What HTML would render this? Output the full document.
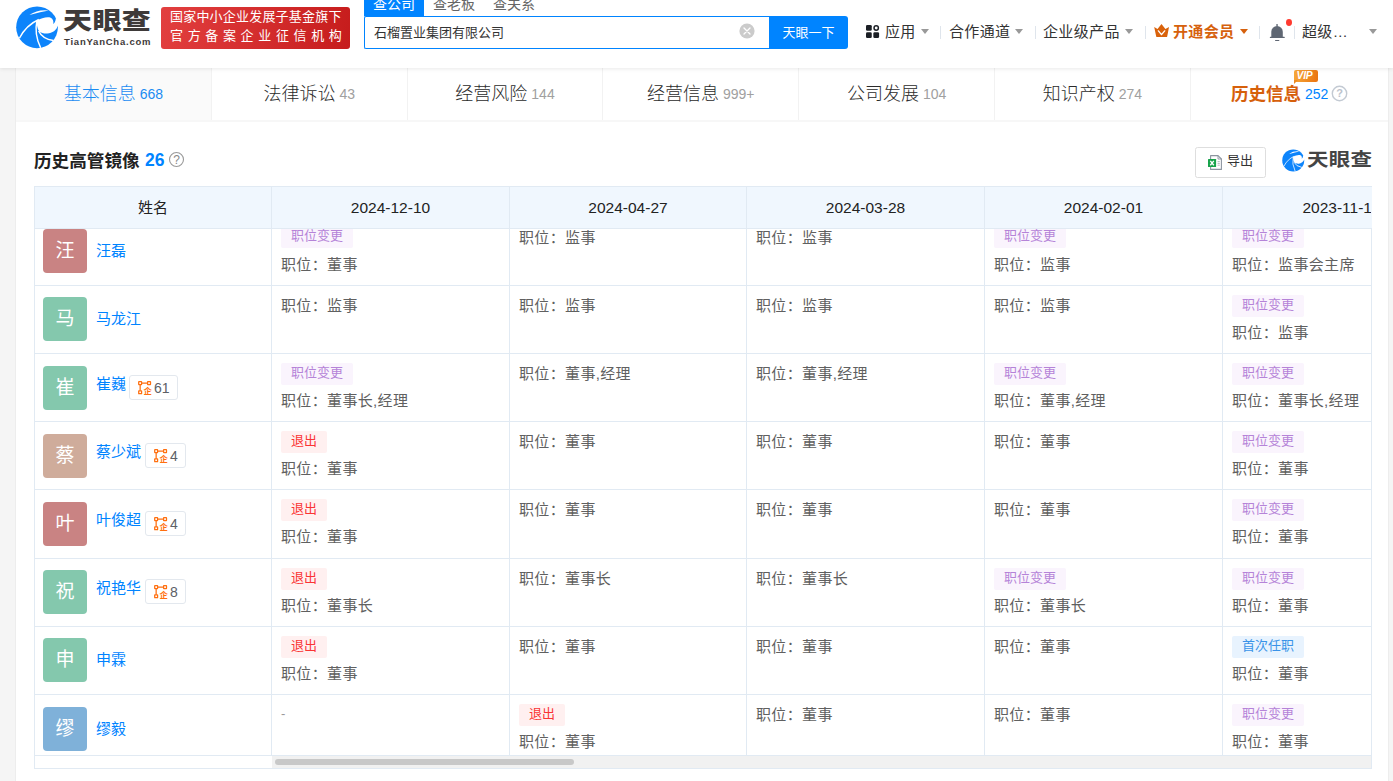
<!DOCTYPE html>
<html lang="zh-CN"><head><meta charset="utf-8"><title>天眼查 - 历史高管镜像</title>
<style>
*{box-sizing:border-box;margin:0;padding:0}
html,body{width:1393px;height:781px;overflow:hidden}
body{background:#f5f5f5;font-family:"Liberation Sans","Noto Sans CJK SC",sans-serif;color:#333;position:relative;font-size:14px}
.abs{position:absolute}
#hdr{position:absolute;left:0;top:0;width:1393px;height:68px;background:#fff;box-shadow:0 1px 4px rgba(0,0,0,.09);z-index:10}
#panel{position:absolute;left:16px;top:68px;width:1372px;height:713px;background:#fff}
#edgeL{position:absolute;left:15px;top:68px;width:1px;height:713px;background:#ededed}
#edgeR{position:absolute;left:1388px;top:68px;width:1px;height:713px;background:#ededed}
.t{position:absolute;white-space:nowrap;line-height:1}
/* header */
.logo-cn{left:63px;top:4px;font-size:29px;font-weight:900;color:#3e3a39;letter-spacing:.4px;transform:scaleY(.84);transform-origin:0 100%}
.logo-en{left:64px;top:36.7px;font-size:9.5px;font-weight:bold;color:#3e3a39;letter-spacing:.78px}
#badge{position:absolute;left:161px;top:7px;width:189px;height:42px;border-radius:3px;background:linear-gradient(100deg,#e23f3f 0%,#d32c2c 55%,#c61c1c 100%);color:#fff}
#badge .l1{left:9px;top:3px;font-size:13px;letter-spacing:.2px;font-weight:400}
#badge .l2{left:9px;top:22.3px;font-size:13px;letter-spacing:4.65px;font-weight:400}
.stab{position:absolute;top:-8px;height:24px;width:60px;text-align:center;font-size:14px;line-height:24px;color:#666}
.stab.on{background:#0084ff;color:#fff}
#sbox{position:absolute;left:364px;top:16px;width:406px;height:33px;border:1px solid #0084ff;border-right:0;background:#fff;border-radius:2px 0 0 2px}
#sbtn{position:absolute;left:769px;top:16px;width:79px;height:33px;background:#0084ff;border-radius:0 3px 3px 0;color:#fff;font-size:13px;text-align:center;line-height:33px}
.nav{font-size:15px;color:#333;top:24px;line-height:16px;letter-spacing:.35px}
.sep{position:absolute;top:26px;width:1px;height:13px;background:#dfe5ec}
.arr{position:absolute;top:29px;width:0;height:0;border-left:4px solid transparent;border-right:4px solid transparent;border-top:5px solid #999}
/* tabs */
.tab{position:absolute;top:0;height:52px;width:196px;border-right:1px solid #f2f2f2;text-align:center;line-height:52px;font-size:18px;color:#2b2b2b;white-space:nowrap;font-weight:300}
.tab small{font-size:14px;color:#a0a0a0;margin-left:4px;font-weight:400;position:relative;top:-1px}
.tab.on{background:#fafafa;color:#1a8cf2}
.tab.on small{color:#1a8cf2}
#tabline{position:absolute;left:0;top:52px;width:1372px;height:2px;background:#f7f7f7}
/* table */
#tbl{position:absolute;left:18px;top:118px;width:1338px;height:583px;overflow:hidden;border-left:1px solid #e1eaf3;border-bottom:1px solid #e1eaf3}
.th{position:absolute;top:0;height:43px;background:#f0f7fe;border-top:1px solid #e1eaf3;border-bottom:1px solid #e1eaf3;border-right:1px solid #e1eaf3;text-align:center;font-size:15px;line-height:42px;color:#222;z-index:3;white-space:nowrap}
.row{position:absolute;left:0;width:1500px;border-top:1px solid #e1eaf3}
.c{position:absolute;top:0;height:100%;border-right:1px solid #e1eaf3}
.av{position:absolute;left:8px;top:11px;width:44px;height:44px;border-radius:4px;color:#fff;font-size:19px;line-height:44px;text-align:center}
.nm{position:absolute;left:61px;font-size:15px;color:#0084ff;line-height:22px;white-space:nowrap}
.bd{position:absolute;height:25px;border:1px solid #e3e8ee;border-radius:3px;font-size:14px;color:#5c6066;line-height:24px;padding-left:24px;padding-right:7px;background:#fff}
.bd svg{position:absolute;left:7.5px;top:4.7px}
.tag{position:absolute;left:9px;top:9px;height:22px;padding:0 10px;border-radius:2px;font-size:13px;line-height:20px;white-space:nowrap}
.tag.p{background:#faf4fd;color:#b583d8}
.tag.r{background:#fff0f0;color:#fa3434}
.tag.b{background:#e8f3fe;color:#3a93e8}
.pos{position:absolute;left:9px;font-size:15px;color:#606060;line-height:22px;white-space:nowrap;letter-spacing:.35px}
</style></head><body>
<div id="hdr">
<svg class="abs" style="left:10px;top:0" width="56" height="56" viewBox="0 0 781 781"><circle cx="377" cy="381" r="291" fill="#0d84fb"/>
<path d="M272 207 Q390 125 542 146 Q420 168 300 203 Z" fill="#fff"/>
<path d="M372 292 C440 250 520 230 568 248 C598 262 612 295 603 336 C618 325 634 300 640 258 L720 250 L720 358 L668 358 C650 420 590 462 520 468 C470 470 430 455 408 438 C380 400 372 340 372 292 Z" fill="#fff"/>
<path d="M131 534 Q225 350 402 272" fill="none" stroke="#fff" stroke-width="20"/>
<path d="M375 288 Q335 480 428 668" fill="none" stroke="#fff" stroke-width="20"/>
<path d="M400 432 Q450 540 604 566" fill="none" stroke="#fff" stroke-width="22"/></svg>
<div class="t logo-cn">天眼查</div>
<div class="t logo-en">TianYanCha.com</div>
<div id="badge"><div class="t l1">国家中小企业发展子基金旗下</div><div class="t l2">官方备案企业征信机构</div></div>
<div class="stab on" style="left:364px">查公司</div><div class="stab" style="left:424px">查老板</div><div class="stab" style="left:484px">查关系</div>
<div id="sbox"><div class="t" style="left:9px;top:9px;font-size:13px;color:#333">石榴置业集团有限公司</div>
<svg class="abs" style="left:374.3px;top:6.3px" width="16" height="16" viewBox="0 0 16 16"><circle cx="8" cy="8" r="7.6" fill="#cbcbcb"/><path d="M5 5 L11 11 M11 5 L5 11" stroke="#fff" stroke-width="1.3" stroke-linecap="round"/></svg>
</div>
<div id="sbtn">天眼一下</div>
<svg class="abs" style="left:866px;top:25px" width="13.9" height="13.9" viewBox="0 0 14 14"><g fill="#1b1f25"><rect x="0" y="0" width="5.8" height="5.8" rx="1.3"/><rect x="0" y="7.3" width="5.8" height="5.8" rx="1.3"/><rect x="7.4" y="7.3" width="5.8" height="5.8" rx="1.3"/></g><circle cx="10.3" cy="3" r="2.2" fill="none" stroke="#1b1f25" stroke-width="1.5"/></svg>
<div class="t nav" style="left:885px">应用</div><div class="arr" style="left:921px"></div>
<div class="sep" style="left:940px"></div>
<div class="t nav" style="left:949px">合作通道</div><div class="arr" style="left:1015px"></div>
<div class="sep" style="left:1035px"></div>
<div class="t nav" style="left:1043px">企业级产品</div><div class="arr" style="left:1125px"></div>
<div class="sep" style="left:1145px"></div>
<svg class="abs" style="left:1154px;top:24px" width="16" height="14" viewBox="0 0 16 14"><path d="M0.2 3 L3.5 4.9 L7.5 0 L11.4 4.9 L15 3 L13.2 12.4 Q13.1 13.1 12.4 13.1 L3 13.1 Q2.3 13.1 2.2 12.4 Z" fill="#d9620b"/><path d="M4.4 6.9 L7.5 10.6 L10.7 6.9" fill="none" stroke="#fff" stroke-width="1.4" stroke-linejoin="round" stroke-linecap="round"/></svg>
<div class="t nav" style="left:1173px;color:#d6610d;font-weight:bold">开通会员</div><div class="arr" style="left:1240px;border-top-color:#d6610d"></div>
<div class="sep" style="left:1259px"></div>
<svg class="abs" style="left:1269px;top:23px" width="17" height="19" viewBox="0 0 17 19"><g fill="#5f6773"><path d="M2.3 14.2 V8.8 A5.75 5.75 0 0 1 13.8 8.8 V14.2 Z"/><rect x=".8" y="13.8" width="15" height="1.3" rx=".6"/><rect x="7.35" y="1.1" width="1.4" height="2.4" rx=".4"/><rect x="6" y="16.9" width="4.4" height="1.2" rx=".6"/></g></svg>
<div class="abs" style="left:1285.9px;top:19px;width:6.1px;height:7px;border-radius:50%;background:#ff3a2f"></div>
<div class="sep" style="left:1294px"></div>
<div class="t nav" style="left:1302px">超级…</div><div class="arr" style="left:1369px"></div>
</div>
<div id="edgeL"></div><div id="edgeR"></div>
<div id="panel">
<div class="tab on" style="left:0.00px;width:195.80px">基本信息<small>668</small></div>
<div class="tab" style="left:195.80px;width:195.80px">法律诉讼<small>43</small></div>
<div class="tab" style="left:391.60px;width:195.80px">经营风险<small>144</small></div>
<div class="tab" style="left:587.40px;width:195.80px">经营信息<small>999+</small></div>
<div class="tab" style="left:783.20px;width:195.80px">公司发展<small>104</small></div>
<div class="tab" style="left:979.00px;width:195.80px">知识产权<small>274</small></div>
<div class="tab" style="left:1174.8px;width:197.2px;border-right:0"></div>
<div class="t" style="left:1215px;top:16px;font-size:17.5px;font-weight:bold;color:#d6600b;line-height:20px">历史信息</div>
<div class="t" style="left:1289px;top:18px;font-size:14px;color:#0084ff;line-height:16px">252</div>
<svg class="abs" style="left:1315px;top:17px" width="17" height="17" viewBox="0 0 17 17"><circle cx="8.5" cy="8.5" r="7.2" fill="none" stroke="#c3cad3" stroke-width="1.4"/><text x="8.5" y="12.4" text-anchor="middle" font-family="Liberation Sans, sans-serif" font-size="11" font-weight="bold" fill="#bcc3cd">?</text></svg>
<div class="abs" style="left:1278px;top:2px;width:24px;height:12px;border-radius:2px;background:linear-gradient(100deg,#f7a93b,#ea7410);"></div>
<div class="abs" style="left:1278px;top:12px;width:0;height:0;border-top:4px solid #ee8a20;border-right:4px solid transparent"></div>
<div class="t" style="left:1280.5px;top:2.6px;font-size:10.3px;font-weight:bold;font-style:italic;color:#fff;letter-spacing:-.2px">VIP</div>
<div id="tabline"></div>
<div class="t" style="left:18px;top:82.5px;font-size:17.6px;font-weight:bold;color:#222;line-height:20px">历史高管镜像</div>
<div class="t" style="left:129px;top:82px;font-size:17.5px;font-weight:bold;color:#0084ff;line-height:20px">26</div>
<svg class="abs" style="left:152px;top:83px" width="17" height="17" viewBox="0 0 17 17"><circle cx="8.5" cy="8.5" r="7" fill="none" stroke="#999" stroke-width="1.1"/><text x="8.5" y="12.7" text-anchor="middle" font-family="Liberation Sans, sans-serif" font-size="12" fill="#888">?</text></svg>
<div class="abs" style="left:1179px;top:79px;width:71px;height:31px;border:1px solid #dedede;border-radius:2.5px;background:#fff"></div>
<svg class="abs" style="left:1192px;top:86px" width="15" height="17" viewBox="0 0 15 17"><path d="M2.6 1.6 H10 L13.4 5 V15.4 H2.6 Z" fill="#fff" stroke="#8d95a0" stroke-width="1.1" stroke-linejoin="round"/><path d="M10 1.6 V5 H13.4" fill="none" stroke="#8d95a0" stroke-width=".9"/><path d="M9.6 7.6h2.2M9.6 9.4h2.2M9.6 11.2h2.2" stroke="#aab0b8" stroke-width=".9"/><rect x="0" y="5" width="8.1" height="8.1" rx=".5" fill="#17a34a"/><path d="M2.3 6.9 L5.8 11.2 M5.8 6.9 L2.3 11.2" stroke="#fff" stroke-width="1.35"/></svg>
<div class="t" style="left:1211px;top:86px;font-size:13px;color:#333;line-height:14px">导出</div>
<svg class="abs" style="left:1263px;top:77.5px" width="29.5" height="29.5" viewBox="0 0 781 781"><circle cx="377" cy="381" r="291" fill="#0d84fb"/>
<path d="M272 207 Q390 125 542 146 Q420 168 300 203 Z" fill="#fff"/>
<path d="M372 292 C440 250 520 230 568 248 C598 262 612 295 603 336 C618 325 634 300 640 258 L720 250 L720 358 L668 358 C650 420 590 462 520 468 C470 470 430 455 408 438 C380 400 372 340 372 292 Z" fill="#fff"/>
<path d="M131 534 Q225 350 402 272" fill="none" stroke="#fff" stroke-width="20"/>
<path d="M375 288 Q335 480 428 668" fill="none" stroke="#fff" stroke-width="20"/>
<path d="M400 432 Q450 540 604 566" fill="none" stroke="#fff" stroke-width="22"/></svg>
<div class="t" style="left:1291px;top:79px;font-size:21.5px;font-weight:700;color:#444;line-height:22px;letter-spacing:.2px;transform:scaleY(.84);transform-origin:0 100%">天眼查</div>
<div id="tbl">
<div class="th" style="left:0px;width:237px">姓名</div>
<div class="th" style="left:237px;width:238px;font-size:15.5px">2024-12-10</div>
<div class="th" style="left:475px;width:237px;font-size:15.5px">2024-04-27</div>
<div class="th" style="left:712px;width:238px;font-size:15.5px">2024-03-28</div>
<div class="th" style="left:950px;width:238px;font-size:15.5px">2024-02-01</div>
<div class="th" style="left:1188px;width:238px;font-size:15.5px">2023-11-15</div>
<div class="row" style="top:31px;height:69px">
<div class="c" style="left:0;width:237px"><div class="av" style="background:#c98383;top:11px">汪</div><div class="nm" style="top:22px">汪磊</div></div>
<div class="c" style="left:237px;width:238px"><div class="tag p" style="top:8px">职位变更</div><div class="pos" style="top:36px">职位：董事</div></div>
<div class="c" style="left:475px;width:237px"><div class="pos" style="top:9px">职位：监事</div></div>
<div class="c" style="left:712px;width:238px"><div class="pos" style="top:9px">职位：监事</div></div>
<div class="c" style="left:950px;width:238px"><div class="tag p" style="top:8px">职位变更</div><div class="pos" style="top:36px">职位：监事</div></div>
<div class="c" style="left:1188px;width:238px"><div class="tag p" style="top:8px">职位变更</div><div class="pos" style="top:36px">职位：监事会主席</div></div>
</div>
<div class="row" style="top:99px;height:69px">
<div class="c" style="left:0;width:237px"><div class="av" style="background:#84c8ad;top:11px">马</div><div class="nm" style="top:22px">马龙江</div></div>
<div class="c" style="left:237px;width:238px"><div class="pos" style="top:9px">职位：监事</div></div>
<div class="c" style="left:475px;width:237px"><div class="pos" style="top:9px">职位：监事</div></div>
<div class="c" style="left:712px;width:238px"><div class="pos" style="top:9px">职位：监事</div></div>
<div class="c" style="left:950px;width:238px"><div class="pos" style="top:9px">职位：监事</div></div>
<div class="c" style="left:1188px;width:238px"><div class="tag p">职位变更</div><div class="pos" style="top:36px">职位：监事</div></div>
</div>
<div class="row" style="top:167px;height:69px">
<div class="c" style="left:0;width:237px"><div class="av" style="background:#84c8ad;top:12px">崔</div><div class="nm" style="top:19px">崔巍</div><div class="bd" style="left:94px;top:21px"><svg width="14" height="14" viewBox="0 0 14 14"><g fill="none" stroke="#ff6f0f" stroke-width="1.25"><rect x=".7" y=".7" width="2.9" height="2.9" rx=".3"/><rect x="9.6" y=".7" width="2.9" height="2.9" rx=".3"/><rect x=".7" y="9.8" width="2.9" height="2.9" rx=".3"/><path d="M3.6 2.15H9.6M2.15 3.6V9.8"/></g><text x="9.7" y="13.1" text-anchor="middle" font-size="8.4" font-weight="bold" fill="#ff6f0f" font-family="Liberation Sans, Noto Sans CJK SC, sans-serif">企</text></svg>61</div></div>
<div class="c" style="left:237px;width:238px"><div class="tag p">职位变更</div><div class="pos" style="top:36px">职位：董事长,经理</div></div>
<div class="c" style="left:475px;width:237px"><div class="pos" style="top:9px">职位：董事,经理</div></div>
<div class="c" style="left:712px;width:238px"><div class="pos" style="top:9px">职位：董事,经理</div></div>
<div class="c" style="left:950px;width:238px"><div class="tag p">职位变更</div><div class="pos" style="top:36px">职位：董事,经理</div></div>
<div class="c" style="left:1188px;width:238px"><div class="tag p">职位变更</div><div class="pos" style="top:36px">职位：董事长,经理</div></div>
</div>
<div class="row" style="top:235px;height:69px">
<div class="c" style="left:0;width:237px"><div class="av" style="background:#cfac9b;top:12px">蔡</div><div class="nm" style="top:19px">蔡少斌</div><div class="bd" style="left:110px;top:21px"><svg width="14" height="14" viewBox="0 0 14 14"><g fill="none" stroke="#ff6f0f" stroke-width="1.25"><rect x=".7" y=".7" width="2.9" height="2.9" rx=".3"/><rect x="9.6" y=".7" width="2.9" height="2.9" rx=".3"/><rect x=".7" y="9.8" width="2.9" height="2.9" rx=".3"/><path d="M3.6 2.15H9.6M2.15 3.6V9.8"/></g><text x="9.7" y="13.1" text-anchor="middle" font-size="8.4" font-weight="bold" fill="#ff6f0f" font-family="Liberation Sans, Noto Sans CJK SC, sans-serif">企</text></svg>4</div></div>
<div class="c" style="left:237px;width:238px"><div class="tag r">退出</div><div class="pos" style="top:36px">职位：董事</div></div>
<div class="c" style="left:475px;width:237px"><div class="pos" style="top:9px">职位：董事</div></div>
<div class="c" style="left:712px;width:238px"><div class="pos" style="top:9px">职位：董事</div></div>
<div class="c" style="left:950px;width:238px"><div class="pos" style="top:9px">职位：董事</div></div>
<div class="c" style="left:1188px;width:238px"><div class="tag p">职位变更</div><div class="pos" style="top:36px">职位：董事</div></div>
</div>
<div class="row" style="top:303px;height:69px">
<div class="c" style="left:0;width:237px"><div class="av" style="background:#c98383;top:12px">叶</div><div class="nm" style="top:19px">叶俊超</div><div class="bd" style="left:110px;top:21px"><svg width="14" height="14" viewBox="0 0 14 14"><g fill="none" stroke="#ff6f0f" stroke-width="1.25"><rect x=".7" y=".7" width="2.9" height="2.9" rx=".3"/><rect x="9.6" y=".7" width="2.9" height="2.9" rx=".3"/><rect x=".7" y="9.8" width="2.9" height="2.9" rx=".3"/><path d="M3.6 2.15H9.6M2.15 3.6V9.8"/></g><text x="9.7" y="13.1" text-anchor="middle" font-size="8.4" font-weight="bold" fill="#ff6f0f" font-family="Liberation Sans, Noto Sans CJK SC, sans-serif">企</text></svg>4</div></div>
<div class="c" style="left:237px;width:238px"><div class="tag r">退出</div><div class="pos" style="top:36px">职位：董事</div></div>
<div class="c" style="left:475px;width:237px"><div class="pos" style="top:9px">职位：董事</div></div>
<div class="c" style="left:712px;width:238px"><div class="pos" style="top:9px">职位：董事</div></div>
<div class="c" style="left:950px;width:238px"><div class="pos" style="top:9px">职位：董事</div></div>
<div class="c" style="left:1188px;width:238px"><div class="tag p">职位变更</div><div class="pos" style="top:36px">职位：董事</div></div>
</div>
<div class="row" style="top:372px;height:69px">
<div class="c" style="left:0;width:237px"><div class="av" style="background:#84c8ad;top:11px">祝</div><div class="nm" style="top:18px">祝艳华</div><div class="bd" style="left:110px;top:20px"><svg width="14" height="14" viewBox="0 0 14 14"><g fill="none" stroke="#ff6f0f" stroke-width="1.25"><rect x=".7" y=".7" width="2.9" height="2.9" rx=".3"/><rect x="9.6" y=".7" width="2.9" height="2.9" rx=".3"/><rect x=".7" y="9.8" width="2.9" height="2.9" rx=".3"/><path d="M3.6 2.15H9.6M2.15 3.6V9.8"/></g><text x="9.7" y="13.1" text-anchor="middle" font-size="8.4" font-weight="bold" fill="#ff6f0f" font-family="Liberation Sans, Noto Sans CJK SC, sans-serif">企</text></svg>8</div></div>
<div class="c" style="left:237px;width:238px"><div class="tag r">退出</div><div class="pos" style="top:36px">职位：董事长</div></div>
<div class="c" style="left:475px;width:237px"><div class="pos" style="top:9px">职位：董事长</div></div>
<div class="c" style="left:712px;width:238px"><div class="pos" style="top:9px">职位：董事长</div></div>
<div class="c" style="left:950px;width:238px"><div class="tag p">职位变更</div><div class="pos" style="top:36px">职位：董事长</div></div>
<div class="c" style="left:1188px;width:238px"><div class="tag p">职位变更</div><div class="pos" style="top:36px">职位：董事</div></div>
</div>
<div class="row" style="top:440px;height:69px">
<div class="c" style="left:0;width:237px"><div class="av" style="background:#84c8ad;top:11px">申</div><div class="nm" style="top:22px">申霖</div></div>
<div class="c" style="left:237px;width:238px"><div class="tag r">退出</div><div class="pos" style="top:36px">职位：董事</div></div>
<div class="c" style="left:475px;width:237px"><div class="pos" style="top:9px">职位：董事</div></div>
<div class="c" style="left:712px;width:238px"><div class="pos" style="top:9px">职位：董事</div></div>
<div class="c" style="left:950px;width:238px"><div class="pos" style="top:9px">职位：董事</div></div>
<div class="c" style="left:1188px;width:238px"><div class="tag b">首次任职</div><div class="pos" style="top:36px">职位：董事</div></div>
</div>
<div class="row" style="top:508px;height:69px">
<div class="c" style="left:0;width:237px"><div class="av" style="background:#7fb1d9;top:12px">缪</div><div class="nm" style="top:23px">缪毅</div></div>
<div class="c" style="left:237px;width:238px"><div class="pos" style="top:8px;font-size:13px;color:#999">-</div></div>
<div class="c" style="left:475px;width:237px"><div class="tag r">退出</div><div class="pos" style="top:36px">职位：董事</div></div>
<div class="c" style="left:712px;width:238px"><div class="pos" style="top:9px">职位：董事</div></div>
<div class="c" style="left:950px;width:238px"><div class="pos" style="top:9px">职位：董事</div></div>
<div class="c" style="left:1188px;width:238px"><div class="tag p">职位变更</div><div class="pos" style="top:36px">职位：董事</div></div>
</div>
<div class="abs" style="left:1336px;top:43px;width:1px;height:540px;background:#e1eaf3;z-index:7"></div>
<div class="abs" style="left:1336px;top:1px;width:2px;height:41px;background:#f0f7fe;z-index:7"></div>
<div class="abs" style="left:0;top:569px;width:1338px;height:14px;background:#fff;border-top:1px solid #e1eaf3;z-index:4"></div>
<div class="abs" style="left:237px;top:570px;width:1101px;height:13px;background:#f1f1f1;z-index:5"></div>
<div class="abs" style="left:240px;top:573px;width:299px;height:6px;border-radius:3px;background:#c8c8c8;z-index:6"></div>
</div>
</div>
</body></html>
